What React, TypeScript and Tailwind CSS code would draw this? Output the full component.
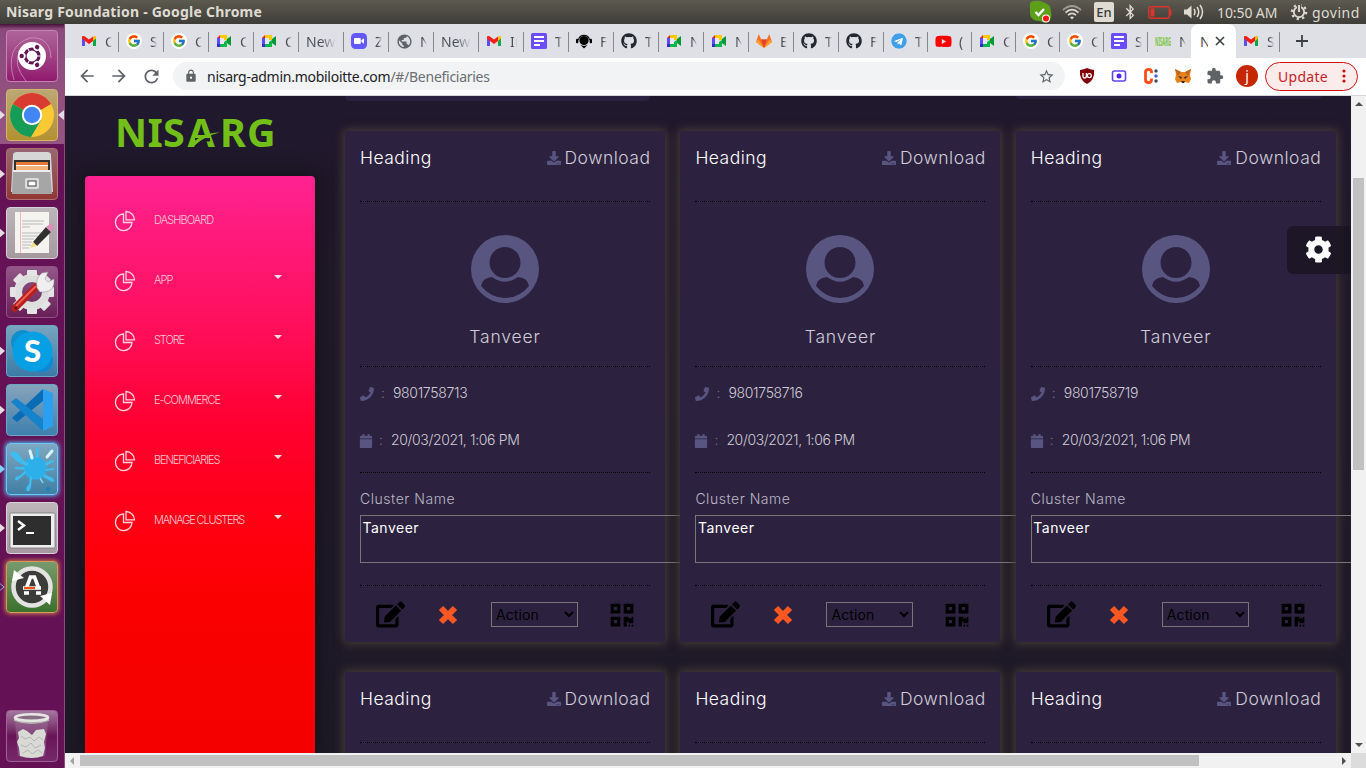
import React from "react";
import { FcGoogle } from "react-icons/fc";
import {
  FaBluetoothB,
  FaCalendar,
  FaCog,
  FaDownload,
  FaEdit,
  FaGithub,
  FaPhone,
  FaQrcode,
  FaTelegram,
  FaYoutube,
} from "react-icons/fa";
import { MdArrowBack, MdArrowForward, MdExtension, MdLock, MdPublic, MdRefresh, MdStarBorder } from "react-icons/md";

/* ---------- favicons ---------- */

const Gmail = () => (
  <svg viewBox="0 0 16 16" className="size-4">
    <path d="M1 4v9h3V6z" fill="#5b4cf5" />
    <path d="M12 6v7h3V4z" fill="#00ac47" />
    <path d="M12 3.6 15 3v2.6L12 8z" fill="#ffba00" />
    <path d="M1 3.2 3.2 3 8 6.6 12 3.5V8L8 11 4 8 1 5.6z" fill="#f21f17" />
  </svg>
);
const Google = () => (
  <span className="grid size-4 place-items-center rounded-full bg-white">
    <FcGoogle size={14} />
  </span>
);
const Meet = () => (
  <svg viewBox="0 0 16 16" className="size-4">
    <path d="M1 5 4 2v3z" fill="#f21f17" />
    <path d="M4 2h7v5H8V5H4z" fill="#ffcb00" />
    <path d="M1 5h3v6H1z" fill="#5b4cf5" />
    <path d="M1 11h3v3H1z" fill="#3826d9" />
    <path d="M4 11h4V9l3-2v7H4z" fill="#00ba48" />
    <path d="m11 6 4-3v10l-4-3z" fill="#009a35" />
    <path d="M4 5h4v6H4z" fill="#e9e4f7" />
  </svg>
);
const Docs = () => (
  <svg viewBox="0 0 16 16" className="size-4">
    <rect width="16" height="16" rx="1.5" fill="#6c4dfb" />
    <path d="M3 4h10M3 8h10M3 12h6" stroke="#fff" strokeWidth="1.8" />
  </svg>
);
const Zoom = () => (
  <svg viewBox="0 0 16 16" className="size-4">
    <rect width="16" height="16" rx="4.5" fill="#6258fb" />
    <rect x="3" y="5" width="6.8" height="6" rx="1" fill="#fff" />
    <path d="m10.3 7.3 2.7-2v5.4l-2.7-2z" fill="#fff" />
  </svg>
);
const Headset = () => (
  <svg viewBox="0 0 16 16" className="size-4">
    <circle cx="8" cy="7.5" r="4.6" fill="#000" />
    <path d="M2.5 7a5.6 5.6 0 0 1 11 0" fill="none" stroke="#111" strokeWidth="1.2" />
    <rect x="0" y="5.8" width="2.4" height="4.4" rx="1" />
    <rect x="13.6" y="5.8" width="2.4" height="4.4" rx="1" />
    <path d="M4 11.5c2 1.8 6 1.8 8 0l-4 4z" />
  </svg>
);
const Gitlab = () => (
  <svg viewBox="0 0 16 16" className="size-4">
    <path d="m0 9 2.8-8 2.4 5.5h5.6L13.2 1 16 9l-8 6z" fill="#fc6d26" />
    <path d="m8 15-2.8-8.5h5.6z" fill="#e24329" />
    <path d="M0 9 2.2 6.5 8 15zM16 9l-2.2-2.5L8 15z" fill="#fca326" />
  </svg>
);
const Nisarg = () => (
  <svg viewBox="0 0 16 16" className="size-4">
    <text x="0" y="12.5" textLength="16" lengthAdjust="spacingAndGlyphs" fontFamily="Noto Sans, sans-serif" fontWeight="700" fontSize="13" fill="#7cc540">
      NISARG
    </text>
  </svg>
);
const Github = () => <FaGithub size={16} color="#24292e" />;
const Telegram = () => (
  <span className="grid size-4 place-items-center rounded-full bg-white">
    <FaTelegram size={16} color="#419fe8" />
  </span>
);
const Youtube = () => <FaYoutube size={17} color="#f00" />;
const Globe = () => <MdPublic size={17} color="#5f6368" />;

type Tab = { icon?: React.ComponentType; label: string };

const wideTabs: Tab[] = [
  { icon: Gmail, label: "C" },
  { icon: Google, label: "S" },
  { icon: Google, label: "C" },
  { icon: Meet, label: "C" },
  { icon: Meet, label: "C" },
  { label: "New" },
  { icon: Zoom, label: "Z" },
  { icon: Globe, label: "N" },
  { label: "New" },
  { icon: Gmail, label: "In" },
  { icon: Docs, label: "T" },
  { icon: Headset, label: "F" },
  { icon: Github, label: "T" },
  { icon: Meet, label: "N" },
  { icon: Meet, label: "N" },
  { icon: Gitlab, label: "E" },
  { icon: Github, label: "T" },
  { icon: Github, label: "F" },
];
const narrowTabs: Tab[] = [
  { icon: Telegram, label: "T" },
  { icon: Youtube, label: "(" },
  { icon: Meet, label: "C" },
  { icon: Google, label: "C" },
  { icon: Google, label: "C" },
  { icon: Docs, label: "S" },
  { icon: Nisarg, label: "N" },
];

function TabItem({ tab, width, divider = true }: { tab: Tab; width: string; divider?: boolean }) {
  const Icon = tab.icon;
  return (
    <div className={`relative flex h-[34px] shrink-0 items-center ${width} ${Icon ? "pl-[7px]" : "pl-[7px]"}`}>
      {Icon && (
        <span className="mr-[8px] grid size-4 shrink-0 place-items-center">
          <Icon />
        </span>
      )}
      <span
        className={`overflow-hidden bg-gradient-to-r from-[#4a4d52] to-[#dee0e6] bg-clip-text text-[14px] text-transparent ${
          Icon ? "w-[7px] from-40%" : "w-[30px] from-50%"
        }`}
      >
        {tab.label}
      </span>
      {divider && <span className="absolute right-0 top-[8px] h-5 w-px bg-[#85888d]" />}
    </div>
  );
}

/* ---------- desktop bar ---------- */

function TopBar() {
  return (
    <header className="flex h-6 shrink-0 items-center bg-gradient-to-b from-[#5d5a4f] to-[#3e3d38] text-[#dfdbd2]">
      <h1 className="w-[1029px] pl-[6px] text-[14px] font-bold leading-6 tracking-[0.22px]">Nisarg Foundation - Google Chrome</h1>
      <svg viewBox="0 0 24 24" className="size-6">
        <path d="M1 6Q0 1 6 1q4-1 8 1 8 2 8 10 2 7-3 9-3 3-8 0Q0 21 1 11z" fill="#5ca019" />
        <path d="m6.5 12 3 3 5.500-6" fill="none" stroke="#fff" strokeWidth="2.4" />
        <circle cx="17" cy="18.5" r="4" fill="#fff" />
        <circle cx="17" cy="18.5" r="3" fill="#f01818" />
      </svg>
      <svg viewBox="0 0 20 16" className="ml-[9px] h-4 w-5" fill="none" stroke="#dfdbd2" strokeWidth="1.7">
        <path d="M1 6q9-8 18 0" opacity=".55" />
        <path d="M3.5 8.7q6.5-6 13 0M6 11.2q4-3.5 8 0" />
        <path d="M8 13.3q2-1.5 4 0L10 15.5z" fill="#dfdbd2" stroke="none" />
      </svg>
      <span className="ml-[12px] h-5 w-5 rounded-[2px] bg-[#dfdbd2] text-center text-[13px] font-medium leading-5 text-[#3c3b37]">En</span>
      <FaBluetoothB className="ml-[8px]" size={16} />
      <svg viewBox="0 0 24 13" className="ml-[10px] h-[13px] w-6">
        <rect x=".7" y=".7" width="20.6" height="11.6" rx="1.5" fill="none" stroke="#d9352c" strokeWidth="1.4" />
        <path d="M2.5 2.5h4v8h-4zM22 3.500h1.500v6H22z" fill="#d9352c" />
      </svg>
      <svg viewBox="0 0 20 16" className="ml-[12px] h-4 w-5" fill="none" stroke="#dfdbd2" strokeWidth="1.5">
        <path d="M0 5.500h3L7.500 1.500v13L3 10.500H0z" fill="#dfdbd2" stroke="none" />
        <path d="M10 5q2 3 0 6M13 3q3.500 5 0 10M16 1q5 7 0 14" />
      </svg>
      <span className="ml-[13px] w-[62px] whitespace-nowrap text-[14px] tracking-[-0.1px]">10:50 AM</span>
      <svg viewBox="0 0 18 18" className="ml-[11px] size-[18px]" fill="none" stroke="#dfdbd2">
        <circle cx="9" cy="9" r="5.2" strokeWidth="1.9" />
        <circle cx="9" cy="9" r="7.2" strokeWidth="2.2" strokeDasharray="2.3 3.35" />
        <path d="M9 1v8" stroke="#4d4b44" strokeWidth="4" />
        <path d="M9 2v7" strokeWidth="1.9" />
      </svg>
      <span className="ml-[4px] text-[14px] tracking-[0.5px]">govind</span>
    </header>
  );
}

/* ---------- launcher ---------- */

const UbuntuArt = () => (
  <>
    <path d="M8 50Q-2 16 24 8q20-2 21 20M20 51Q6 34 14 20" fill="none" stroke="#d79bc8" strokeWidth="1" opacity=".7" />
    <circle cx="26" cy="26" r="14" fill="#fff" />
    <circle cx="26" cy="26" r="7" fill="none" stroke="#611454" strokeWidth="3.2" />
    {[60, 180, 300].map((a) => (
      <g key={a} transform={`rotate(${a} 26 26)`}>
        <circle cx="35.5" cy="26" r="3.2" fill="#fff" />
        <circle cx="36.300" cy="26" r="2.200" fill="#611454" />
      </g>
    ))}
    {[0, 120, 240].map((a) => (
      <path key={a} d="M31 26h5" stroke="#fff" strokeWidth="1" transform={`rotate(${a} 26 26)`} />
    ))}
  </>
);
const ChromeArt = () => (
  <>
    <circle cx="26" cy="26" r="22" fill="#fbc934" />
    <path d="M26 26 7 15A22 22 0 0 1 45 15z" fill="#da3b31" />
    <path d="M7 15a22 22 0 0 0 18 33l10-17-9-5z" fill="#159c56" />
    <circle cx="26" cy="26" r="10.2" fill="#fff" />
    <circle cx="26" cy="26" r="8.2" fill="#4285f4" />
  </>
);
const FilesArt = () => (
  <>
    <path d="M7 7q0-3 4-3h30q4 0 4 3l2 37H5z" fill="#d6d6d6" />
    <path d="M8 12h36v12H8z" fill="#30302e" />
    <path d="M10 14h32v10H10z" fill="#e57937" />
    <path d="M10 17h32v1.500H10z" fill="#fff" />
    <path d="M10 18.500h32V22H10z" fill="#f3b377" />
    <path d="M7 22h37l2 24H6z" fill="#a6a6a6" />
    <path d="M7 22h37v2H7z" fill="#eee" />
    <rect x="19" y="30" width="14" height="11" rx="2" fill="#ddd" />
    <rect x="22" y="33" width="8" height="5" fill="#fff" stroke="#444" />
  </>
);
const EditorArt = () => (
  <>
    <path d="M9 5h34v41H9z" fill="#f4f3f0" />
    <path d="M14.5 5v41" stroke="#f2b5b5" />
    <path d="M16 14h22M16 17h21M16 20h8M16 26h21M16 29h16M16 32h12M16 35h10M16 38h9M16 41h7" stroke="#b9babe" strokeWidth="1" />
    <path d="m27 35 13-15 5 5-14 14z" fill="#303030" />
    <path d="m40 20 4-3q4 0 4 4l-3 4z" fill="#dd8db8" />
    <path d="m24 41 3-6 4 4z" fill="#f1dc87" />
  </>
);
const SettingsArt = () => (
  <>
    <circle cx="26" cy="26" r="14" fill="none" stroke="#dedede" strokeWidth="8" />
    {[0, 45, 90, 135, 180, 225, 270, 315].map((a) => (
      <rect key={a} x="21" y="4" width="10" height="6" rx="1" fill="#e4e4e4" transform={`rotate(${a} 26 26)`} />
    ))}
    <path d="m9 42 21-21" stroke="#b91f1b" strokeWidth="7" strokeLinecap="round" />
    <path d="m10 40 20-20" stroke="#ed5f53" strokeWidth="2" />
    <path d="M31 22q-2-10 5-15l6-1-3 7 3 3 6-3q1 12-9 13l-5 0z" fill="#efefef" stroke="#999" strokeWidth=".6" />
    <circle cx="10" cy="42" r="1.5" fill="#541212" />
  </>
);
const SkypeArt = () => (
  <>
    <circle cx="17" cy="17" r="12" fill="#0f8ecc" />
    <circle cx="36" cy="36" r="11" fill="#0d8ad7" />
    <circle cx="26.5" cy="26.5" r="20" fill="#079fe4" />
    <text x="26.5" y="37" textAnchor="middle" fontFamily="Lato, sans-serif" fontWeight="900" fontSize="31" fill="#fff">
      S
    </text>
  </>
);
const CodeArt = () => (
  <>
    <path d="m6 34 5 4 26-21V5z" fill="#0a6cb5" />
    <path d="m5 18 5-4 27 21v12z" fill="#1583cb" />
    <path d="m37 5 10 4v33l-10 5z" fill="#2ba0f1" />
  </>
);
const SplashArt = () => (
  <>
    <circle cx="29" cy="25" r="11.5" fill="#2db0ea" />
    <g fill="#3fbcf0">
      <path d="M4 10q6-4 10 3 4 7 9 7l-2 3Q8 19 4 10z" />
      <path d="M30 15V5q2-3 3 0l-1 10z" />
      <path d="m39 20 7-3q4 0 1 2l-7 4zM40 26l7-1q4 1 0 2l-7 1zM38 31l9 4q3 4-1 4l-9-5z" />
      <path d="m26 34-1 10q-2 7-5 3 0-3 3-6l1-8zM20 30l-7 6q-4 3-4 0 0-3 4-3l6-5zM18 24H10q-3 1 0 2l9 1z" />
    </g>
    <path d="M24 8l2 7M46 8l-5 6" stroke="#d9f3ff" strokeWidth="3" strokeLinecap="round" />
    <path d="m34 35 3 5" stroke="#7ad4f9" strokeWidth="1.5" />
    <circle cx="42" cy="46" r="2.200" fill="#1b82c0" />
  </>
);
const TerminalArt = () => (
  <>
    <rect x="4" y="11" width="45" height="35" rx="1" fill="#ededed" stroke="#777" strokeWidth=".8" />
    <rect x="7" y="14" width="38" height="29" fill="#2e2e2e" />
    <path d="m12 19 6 4.5-6 4.500" fill="none" stroke="#fff" strokeWidth="2.4" />
    <path d="M20 31h8" stroke="#fff" strokeWidth="2" />
  </>
);
const UpdaterArt = () => (
  <>
    <circle cx="26" cy="26" r="18.5" fill="#3c3c3a" stroke="#e3e3e1" strokeWidth="4.5" />
    <path d="m6 20 2-11 10 8zM46 32l-2 12-10-9z" fill="#fff" />
    <path d="m20 28 4.500-12h4L33 28" fill="none" stroke="#fff" strokeWidth="3.6" />
    <path d="M17 27h18M18 32h5M30 32h5" stroke="#fff" strokeWidth="3.4" />
    <path d="M18 27h11" stroke="#ed5515" strokeWidth="2.2" />
  </>
);
const TrashArt = () => (
  <>
    <path d="m9 12 3 34q13 4 27 0l3-34z" fill="#9a6f97" opacity=".5" />
    <path d="m12 22 5-3 4 2 5 4 4-5 8-1 2 5-2 8 1 6-2 8q-11 4-23 0l-1-8-2-6 2-4z" fill="#d9d9d5" />
    <path d="m15 26 4 3 5-2 4 4 5-4 4 3M15 35l5 2 5-4 4 5 6-3M17 43l5-3 4 4 6-4 4 3" fill="none" stroke="#b5b5b2" />
    <path d="M8 8v3q17 6 35 0V8z" fill="#b5b5b1" />
    <ellipse cx="25.5" cy="7.500" rx="16.500" ry="3.200" fill="#8a6d84" stroke="#e6e6e2" strokeWidth="2.600" />
  </>
);

type Launch = { name: string; tile: string; art: React.ComponentType; running?: boolean; focused?: boolean; blue?: boolean };

const launchers: Launch[] = [
  { name: "Dash", tile: "border-[#c883b4] bg-gradient-to-b from-[#ad6499] to-[#91176f]", art: UbuntuArt },
  { name: "Chrome", tile: "border-[#d0b968] bg-gradient-to-b from-[#bca776] to-[#b4912f]", art: ChromeArt, running: true, focused: true },
  { name: "Files", tile: "border-[#ae7070] bg-gradient-to-b from-[#966771] to-[#913735]", art: FilesArt, running: true },
  { name: "Editor", tile: "border-[#d8d1d6] bg-gradient-to-b from-[#bcb5b9] to-[#a5999f]", art: EditorArt, running: true },
  { name: "Settings", tile: "border-[#925288] bg-gradient-to-b from-[#925788] to-[#682057]", art: SettingsArt },
  { name: "Skype", tile: "border-[#6aa6c6] bg-gradient-to-b from-[#78a4bf] to-[#3a7ba7]", art: SkypeArt, running: true },
  { name: "Code", tile: "border-[#6aa6c6] bg-gradient-to-b from-[#86a3bb] to-[#3d80ad]", art: CodeArt, running: true },
  { name: "Splash", tile: "border-[#6cc8f8] bg-gradient-to-b from-[#7fa7c0] to-[#3f80a4] shadow-[0_0_4px_1px_#52b8ef]", art: SplashArt, running: true, blue: true },
  { name: "Terminal", tile: "border-[#d8d1d6] bg-gradient-to-b from-[#bcb5b9] to-[#a5999f]", art: TerminalArt, running: true },
  { name: "Updater", tile: "border-[#d89a55] bg-gradient-to-b from-[#779a6e] to-[#3b712d] shadow-[0_0_4px_1px_#cf7b4e]", art: UpdaterArt },
];

function Tile({ item }: { item: Launch }) {
  const Art = item.art;
  return (
    <div className="relative flex h-[59px] w-full shrink-0 pl-[6px] pt-[6px]">
      {item.running && (
        <svg viewBox="0 0 6 10" className="absolute left-0 top-[27px] h-[10px] w-[5px]">
          <path d="m0 0 6 5-6 5z" fill={item.blue ? "#82cff6" : "#e6dce3"} />
        </svg>
      )}
      {item.focused && (
        <svg viewBox="0 0 6 10" className="absolute right-0 top-[27px] h-[10px] w-[6px]">
          <path d="M6 0 0 5l6 5z" fill="#e6dce3" />
        </svg>
      )}
      {item.name === "Updater" && (
        <svg viewBox="0 0 6 10" className="absolute left-0 top-[27px] h-[10px] w-[5px]">
          <path d="m0 1 5 4-5 4" fill="none" stroke="#82cff6" />
        </svg>
      )}
      <div className={`size-[52px] rounded-[4px] border ${item.tile}`}>
        <svg viewBox="1 1 50 50" className="size-[50px]">
          <Art />
        </svg>
      </div>
    </div>
  );
}

function Launcher() {
  return (
    <aside className="flex w-[65px] shrink-0 flex-col border-r border-[#8b4f7f] bg-[linear-gradient(180deg,#45103a_0,#8a4a7b_5px,#965583_120px,#651155_120px,#651155_100%)]">
      {launchers.map((l) => (
        <Tile key={l.name} item={l} />
      ))}
      <div className="mb-[5px] mt-auto">
        <Tile item={{ name: "Trash", tile: "border-[#a15f97] bg-gradient-to-b from-[#a477a0] via-[#681458] to-[#76296a]", art: TrashArt }} />
      </div>
    </aside>
  );
}

/* ---------- browser chrome ---------- */

function TabStrip() {
  return (
    <div className="flex h-[34px] shrink-0 bg-[#dee0e6] pl-[9px]">
      {wideTabs.map((t, i) => (
        <TabItem key={i} tab={t} width="w-[45px]" />
      ))}
      {narrowTabs.map((t, i) => (
        <TabItem key={i} tab={t} width="w-[44px]" divider={i < 6} />
      ))}
      <div className="-ml-px flex h-[34px] w-[45px] items-center rounded-t-[8px] bg-white pl-[9px] text-[14px] text-[#4a4d52]">
        <span className="w-[8px] overflow-hidden">N</span>
        <svg viewBox="0 0 10 10" className="ml-[7px] size-[10px]" stroke="#3c4043" strokeWidth="1.6">
          <path d="m1 1 8 8M9 1 1 9" />
        </svg>
      </div>
      <TabItem tab={{ icon: Gmail, label: "S" }} width="w-[44px]" />
      <svg viewBox="0 0 12 12" className="ml-4 mt-[11px] size-3" stroke="#3c4043" strokeWidth="1.8">
        <path d="M6 0v12M0 6h12" />
      </svg>
    </div>
  );
}

function Toolbar() {
  return (
    <div className="flex h-[38px] shrink-0 items-center border-b border-[#d5d7da] bg-white pb-px pl-[12px] text-[#5f6368]">
      <MdArrowBack size={20} />
      <MdArrowForward size={20} className="ml-[12px]" />
      <MdRefresh size={21} className="ml-[12px]" />
      <div className="ml-[11px] flex h-7 w-[892px] items-center rounded-full bg-[#f1f3f4] pl-[11px] pr-[10px]">
        <MdLock size={14} />
        <span className="ml-[9px] text-[14px] tracking-[-0.27px] text-[#202124]">
          nisarg-admin.mobiloitte.com<span className="text-[#6b6f73]">/#/Beneficiaries</span>
        </span>
        <MdStarBorder size={17} className="ml-auto" />
      </div>
      <svg viewBox="0 0 16 16" className="ml-[14px] size-4">
        <path d="M8 0q3 1.5 7 2 1 10-7 14Q0 12 1 2q4-.5 7-2z" fill="#800008" />
        <path d="M4 5v3q0 2 1.7 2T7.400 8V5" fill="none" stroke="#fff" strokeWidth="1.3" />
        <circle cx="10.3" cy="7.6" r="2" fill="none" stroke="#fff" strokeWidth="1.3" />
      </svg>
      <svg viewBox="0 0 16 16" className="ml-4 size-4">
        <rect x="1.5" y="3" width="13" height="10" rx="2" fill="#fff" stroke="#5f45ee" strokeWidth="1.6" />
        <circle cx="8" cy="8" r="2.5" fill="#5127e8" />
      </svg>
      <svg viewBox="0 0 16 16" className="ml-4 size-4">
        <path d="M8.500 5V3.500Q8.500 1.500 5.500 1.500T2.500 4v8Q2.500 14.500 5.500 14.500t3-2.500v-1.500" fill="none" stroke="#ff4e18" strokeWidth="2.8" />
        <circle cx="13" cy="3" r="1.7" fill="#44475c" />
        <circle cx="13" cy="8" r="1.7" fill="#415bdb" />
        <circle cx="13" cy="13" r="1.7" fill="#44475c" />
      </svg>
      <svg viewBox="0 0 16 16" className="ml-4 size-4">
        <path d="m0 1 6 3h4l6-3-1 6 1 4-2 4-4-1-2 1-2-1-4 1-2-4 1-4z" fill="#e8821e" />
        <path d="m0 1 6 3-3 4zM16 1l-6 3 3 4z" fill="#b8651d" />
        <path d="m3 8 4 1-1 2zM13 8 9 9l1 2zM6 13h4l-1 2H7z" fill="#3c2d20" />
      </svg>
      <MdExtension size={18} className="ml-[15px]" />
      <span className="ml-[12px] size-[22px] rounded-full bg-[#c52800] text-center text-[14px] leading-[21px] text-white">j</span>
      <div className="ml-[7px] flex h-[29px] w-[93px] items-center rounded-full border border-[#cf1010] bg-[#fcebeb] pl-[12px] text-[14px] text-[#c5221f]">
        <span className="w-[64px] tracking-[0.3px]">Update</span>
        <svg viewBox="0 0 4 14" className="h-[14px] w-1" fill="#c5120f">
          <circle cx="2" cy="2" r="1.6" />
          <circle cx="2" cy="7" r="1.6" />
          <circle cx="2" cy="12" r="1.6" />
        </svg>
      </div>
    </div>
  );
}

/* ---------- page ---------- */

const menu = [
  { label: "DASHBOARD", cls: "tracking-[-0.92px]", caret: false },
  { label: "APP", cls: "tracking-[-0.95px]", caret: true },
  { label: "STORE", cls: "tracking-[-1.1px]", caret: true },
  { label: "E-COMMERCE", cls: "tracking-[-0.97px]", caret: true },
  { label: "BENEFICIARIES", cls: "tracking-[-1.1px]", caret: true },
  { label: "MANAGE CLUSTERS", cls: "tracking-[-1.15px]", caret: true },
];

function Sidebar() {
  return (
    <nav className="flex w-[250px] shrink-0 flex-col pl-5">
      <svg viewBox="0 0 230 80" className="h-20 w-[230px] shrink-0" fill="#73bf19">
        <text x="30 62.5 78 102.500 135 162" y="50.5" fontFamily="Noto Sans, sans-serif" fontWeight="700" fontSize="39.5">
          NISARG
        </text>
        <path d="M110 42h15v3.500h-15z" fill="#20182d" />
        <path d="M104 50q12-13 31-13.500-15 3-26 13.500z" />
      </svg>
      <div className="flex flex-1 flex-col rounded-t-[4px] bg-[linear-gradient(180deg,#ff2291_0,#ff0f5c_148px,#ff0030_250px,#ff0012_350px,#fb0000_420px,#f40000_577px)] pt-[14px] shadow-[0_0_18px_4px_#14121a]">
        {menu.map((m) => (
          <div key={m.label} className="flex h-[60px] shrink-0 items-center pl-[29px]">
            <svg viewBox="0 0 22 22" className="mt-[2px] size-[22px]" fill="none" stroke="#ffd3df" strokeWidth="1.3">
              <path d="M9.500 4A8.300 8.300 0 1 0 18 12.500H9.500z" />
              <path d="M12 1.500v8.300h8.500A8.500 8.500 0 0 0 12 1.500z" />
            </svg>
            <span className={`ml-[18px] mt-px w-[120px] whitespace-nowrap text-[11px] font-light text-[#ffc6d2] ${m.cls}`}>{m.label}</span>
            {m.caret && (
              <svg viewBox="0 0 8 4" className="-mt-[6px] h-1 w-2">
                <path d="M0 0h8L4 4z" fill="#ffd9e2" />
              </svg>
            )}
          </div>
        ))}
      </div>
    </nav>
  );
}

const phones = ["9801758713", "9801758716", "9801758719", "9801758713", "9801758716", "9801758719"];

function Card({ phone }: { phone: string }) {
  return (
    <article className="relative h-[511px] rounded-[3px] bg-[#2c2240] px-[15px] text-[#cfccd6] shadow-[0_0_10px_2px_#453c38]">
      <div className="flex h-[71px] items-start border-b border-dotted border-black pt-[15px] text-[17.5px] font-light leading-6">
        <span className="tracking-[0.48px] text-white">Heading</span>
        <span className="ml-auto flex items-center">
          <FaDownload size={14} color="#585581" className="mr-[4px]" />
          <span className="-mr-[0.5px] tracking-[0.500px]">Download</span>
        </span>
      </div>
      <div className="flex h-[165px] flex-col items-center border-b border-dotted border-black pt-[33px]">
        <svg viewBox="0 0 68 68" className="size-[68px] shrink-0">
          <circle cx="34" cy="34" r="34" fill="#585581" />
          <circle cx="34" cy="27.5" r="15.5" fill="#2c2240" />
          <path d="M10 51q1-8 11-9 13 9.500 26 0 10 1 11 9Q48 63 34 63 20 63 10 51z" fill="#2c2240" />
        </svg>
        <span className="mt-5 text-[17.5px] font-light leading-7 tracking-[0.850px]">Tanveer</span>
      </div>
      <div className="h-[106px] border-b border-dotted border-black pt-[3px] text-[14px] font-light">
        <div className="flex h-[47px] items-center">
          <FaPhone size={14} color="#585581" />
          <span className="-mt-[2px] ml-[7px] w-[12px] text-[#6e6b93]">:</span>
          <span className="-mt-[2px] tracking-[-0.32px]">{phone}</span>
        </div>
        <div className="flex h-[47px] items-center">
          <FaCalendar size={14} color="#585581" className="-ml-px" />
          <span className="-mt-[2px] ml-[6px] w-[12px] text-[#6e6b93]">:</span>
          <span className="-mt-[2px] tracking-[-0.36px]">20/03/2021, 1:06 PM</span>
        </div>
      </div>
      <div className="h-[113px] border-b border-dotted border-black pt-[13px]">
        <div className="text-[14px] font-light leading-[26px] tracking-[0.53px] text-[#bbb8c4]">Cluster Name</div>
        <div className="mt-[3px] h-12 w-[340px] border border-[#767676] pl-[1.5px] pt-[1px] text-[14px] leading-[22px] tracking-[0.5px] text-white">
          Tanveer
        </div>
      </div>
      <div className="flex h-14 items-center pl-[16px]">
        <FaEdit size={29} color="#000" />
        <svg viewBox="0 0 20 20" className="ml-[33px] mt-px size-5" stroke="#ff5722" strokeWidth="6" strokeLinejoin="round">
          <path d="m3 3 14 14M17 3 3 17" />
        </svg>
        <div className="ml-[33px] flex h-[25px] w-[87px] items-center border border-[#767676] pl-[4px] text-[14px] text-black">
          <span className="w-[68px] tracking-[0.1px]">Action</span>
          <svg viewBox="0 0 10 7" className="h-[7px] w-[10px]" fill="none" stroke="#000" strokeWidth="2">
            <path d="m1 1 4 4 4-4" />
          </svg>
        </div>
        <FaQrcode size={26} color="#000" className="ml-[31px] mt-px" />
      </div>
    </article>
  );
}

function Page() {
  return (
    <main className="relative flex min-w-0 flex-1 overflow-hidden bg-[linear-gradient(180deg,#20182d_0,#211a29_200px,#1e1a27_100%)] font-[Inter,sans-serif]">
      <Sidebar />
      <div className="w-[1036px] shrink-0 pl-[30px]">
        <div className="flex h-[35px] justify-between pr-[30px]">
          <div className="h-[5px] w-[305px] rounded-b-[5px] bg-[#2a2240]" />
          <div className="h-[3px] w-[305px] rounded-b-[5px] bg-[#2a2240]" />
        </div>
        <div className="grid grid-cols-[320px_320px_320px] gap-x-[15.4px] gap-y-[30px]">
          {phones.map((p, i) => (
            <Card key={i} phone={p} />
          ))}
        </div>
      </div>
      <button className="absolute right-0 top-[130px] flex h-12 w-16 items-center rounded-l-[6px] bg-[#191421]/80 pb-px pl-[18px]">
        <FaCog size={27} color="#fff" />
      </button>
    </main>
  );
}

function Browser() {
  return (
    <section className="flex min-w-0 flex-1 flex-col">
      <TabStrip />
      <Toolbar />
      <div className="flex min-h-0 flex-1">
        <Page />
        <div className="flex w-[15px] shrink-0 flex-col items-center bg-[#f1f1f1]">
          <svg viewBox="0 0 8 4" className="mt-[6px] h-1 w-2">
            <path d="m0 4 4-4 4 4z" fill="#505050" />
          </svg>
          <div className="mt-[72px] h-[292px] w-[11px] bg-[#c1c1c1]" />
          <svg viewBox="0 0 8 4" className="mb-[6px] mt-auto h-1 w-2">
            <path d="m0 0 4 4 4-4z" fill="#505050" />
          </svg>
        </div>
      </div>
      <div className="flex h-[15px] shrink-0 items-center bg-[#f1f1f1]">
        <svg viewBox="0 0 4 8" className="ml-[5px] h-2 w-1">
          <path d="M4 0 0 4l4 4z" fill="#a3a3a3" />
        </svg>
        <div className="ml-[6px] h-[11px] w-[1119px] bg-[#c1c1c1]" />
        <svg viewBox="0 0 4 8" className="ml-auto mr-[5px] h-2 w-1">
          <path d="m0 0 4 4-4 4z" fill="#505050" />
        </svg>
        <div className="size-[15px] bg-[#dcdcdc]" />
      </div>
    </section>
  );
}

export default function App() {
  return (
    <div className="flex h-[768px] w-[1366px] flex-col overflow-hidden font-['Noto_Sans',sans-serif]">
      <TopBar />
      <div className="flex min-h-0 flex-1">
        <Launcher />
        <Browser />
      </div>
    </div>
  );
}
